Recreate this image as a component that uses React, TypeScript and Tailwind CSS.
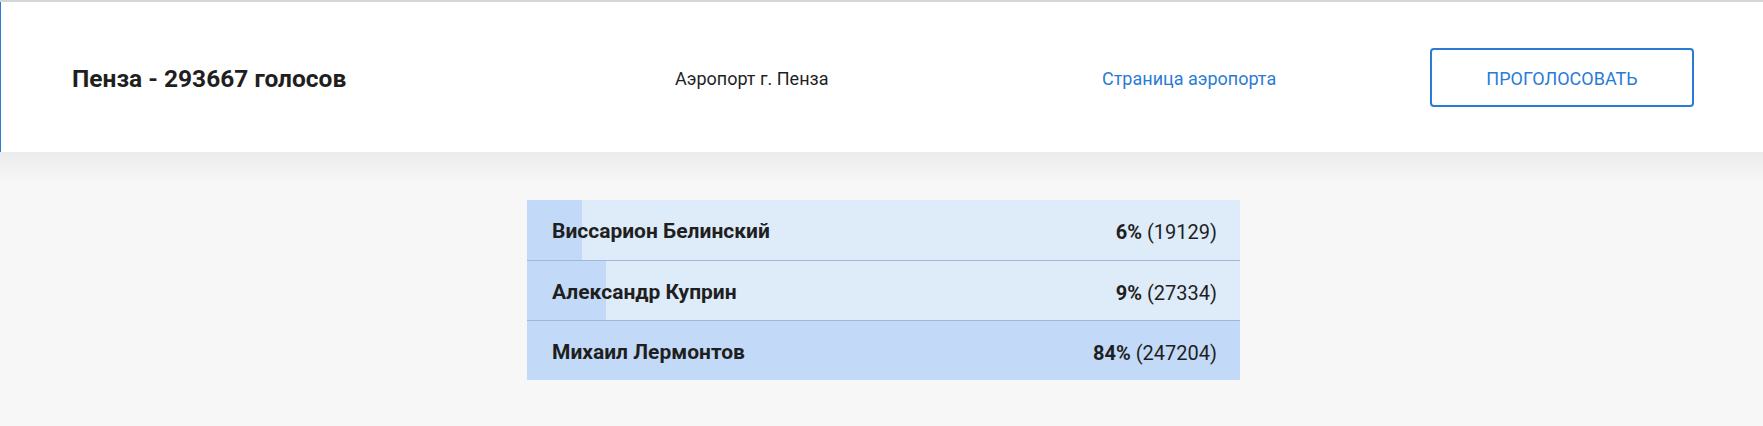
import React from 'react';

const font = { fontFamily: 'Roboto, "Liberation Sans", sans-serif' };

const candidates = [
  { id: 1, name: 'Виссарион Белинский', votes: 19129 },
  { id: 2, name: 'Александр Куприн', votes: 27334 },
  { id: 3, name: 'Михаил Лермонтов', votes: 247204 },
];

const App = () => {
  const total = candidates.reduce((sum, c) => sum + c.votes, 0);
  const max = Math.max(...candidates.map((c) => c.votes));

  const renderRows = () =>
    candidates.map((c, i) => (
      <div
        key={c.id}
        className={`relative h-[60px] bg-[#deebf9] ${i > 0 ? 'border-t border-[#9fb8d9]' : ''}`}
      >
        <div
          className="absolute left-0 top-0 bottom-0 bg-[#c2daf7]"
          style={{ width: `${(c.votes / max) * 100}%` }}
        />
        <div className="relative flex h-full items-center justify-between pt-[4px] pl-[25px] pr-[23px] text-[#1f1f1f]">
          <span className="text-[21px] font-bold">{c.name}</span>
          <span className="text-[20px]">
            <b>{Math.floor((c.votes / total) * 100)}%</b> ({c.votes})
          </span>
        </div>
      </div>
    ));

  return (
    <div className="min-h-[426px] bg-[#f7f7f7]" style={font}>
      <div className="border-t-2 border-[#d6d6d6] bg-white">
        <div className="grid h-[150px] grid-cols-[603px_427px_328px_264px] items-center border-l border-[#2a7bd6] pl-[71px]">
          <h1 className="pt-[4px] text-[24.5px] font-bold text-[#1f1f1f]">Пенза - 293667 голосов</h1>
          <span className="pt-[3px] text-[18px] text-[#1f1f1f]">Аэропорт г. Пенза</span>
          <a href="#" className="pt-[3px] text-[18px] text-[#2a7bd6]">Страница аэропорта</a>
          <button className="h-[59px] rounded-[4px] border-2 border-[#2a7bd6] pt-[2px] text-[18px] text-[#2a7bd6]">
            ПРОГОЛОСОВАТЬ
          </button>
        </div>
      </div>
      <div className="bg-[linear-gradient(#ececec,#f7f7f7_32px)] pt-[48px] pb-[46px]">
        <div className="ml-[527px] w-[713px]">{renderRows()}</div>
      </div>
    </div>
  );
};

export default App;
